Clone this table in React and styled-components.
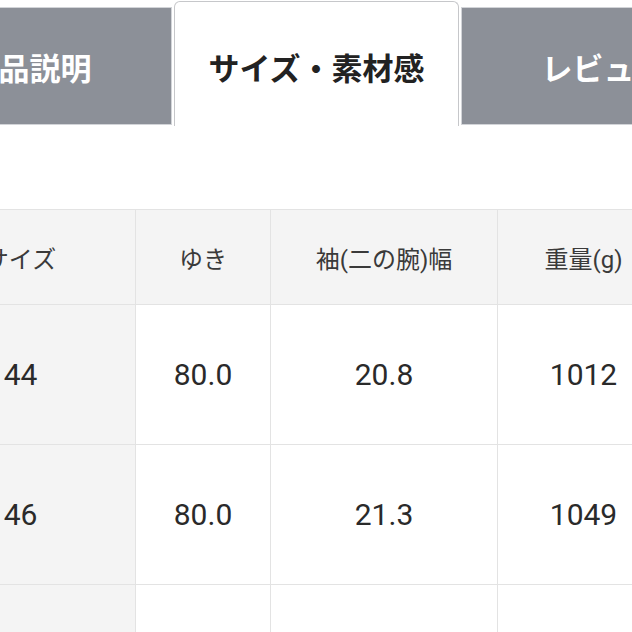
import React from 'react';
import styled, { createGlobalStyle } from 'styled-components';

const GlobalStyle = createGlobalStyle`
  body {
    margin: 0;
    background: #ffffff;
    overflow: hidden;
    font-family: Roboto, "Noto Sans CJK JP", sans-serif;
  }
`;

const Page = styled.div`
  width: 632px;
  height: 632px;
  overflow: hidden;
`;

const TabBar = styled.div`
  display: flex;
  align-items: flex-end;
  gap: 2px;
  margin-left: -113px;
  height: 126px;
`;

const Tab = styled.div`
  flex: 0 0 285px;
  box-sizing: border-box;
  display: flex;
  align-items: center;
  justify-content: center;
  height: ${(p) => (p.$active ? '125px' : '118px')};
  padding-top: ${(p) => (p.$active ? '5px' : '0')};
  margin-bottom: ${(p) => (p.$active ? '0' : '1px')};
  background: ${(p) => (p.$active ? '#ffffff' : '#8c9098')};
  border: 1px solid ${(p) => (p.$active ? '#c6c7ca' : '#d2d4d8')};
  border-bottom: ${(p) => (p.$active ? 'none' : '1px solid #d2d4d8')};
  border-radius: ${(p) => (p.$active ? '6px 6px 0 0' : '0')};
  color: ${(p) => (p.$active ? '#222222' : '#ffffff')};
  font-family: "Noto Sans CJK JP", sans-serif;
  font-weight: 700;
  font-size: 31px;
  white-space: nowrap;
`;

const SizeTable = styled.table`
  border-collapse: collapse;
  margin-top: 83px;
  margin-left: -95px;
  width: 764px;
  min-width: 764px;
  table-layout: fixed;
`;

const HeadCell = styled.th`
  height: 94px;
  padding: 0;
  border: 1px solid #e3e3e3;
  background: #f4f4f4;
  color: #3a3a3a;
  font-weight: 400;
  font-size: 24px;
  text-align: center;
  white-space: nowrap;
`;

const Cell = styled.td`
  height: 139px;
  padding: 0;
  border: 1px solid #e3e3e3;
  background: ${(p) => (p.$label ? '#f4f4f4' : '#ffffff')};
  color: #2a2a2a;
  font-size: 30px;
  text-align: center;
  white-space: nowrap;
`;

const columns = ['サイズ', 'ゆき', '袖(二の腕)幅', '重量(g)'];
const widths = [230, 135, 227, 172];

const rows = [
  ['44', '80.0', '20.8', '1012'],
  ['46', '80.0', '21.3', '1049'],
  ['48', '81.5', '21.8', '1088'],
];

export default function App() {
  return (
    <Page>
      <GlobalStyle />
      <TabBar>
        <Tab>商品説明</Tab>
        <Tab $active>サイズ・素材感</Tab>
        <Tab>レビュー</Tab>
      </TabBar>
      <SizeTable>
        <colgroup>
          {widths.map((w, i) => (
            <col key={i} style={{ width: w }} />
          ))}
        </colgroup>
        <thead>
          <tr>
            {columns.map((c) => (
              <HeadCell key={c}>{c}</HeadCell>
            ))}
          </tr>
        </thead>
        <tbody>
          {rows.map((r) => (
            <tr key={r[0]}>
              {r.map((v, i) => (
                <Cell key={i} $label={i === 0}>
                  {v}
                </Cell>
              ))}
            </tr>
          ))}
        </tbody>
      </SizeTable>
    </Page>
  );
}
